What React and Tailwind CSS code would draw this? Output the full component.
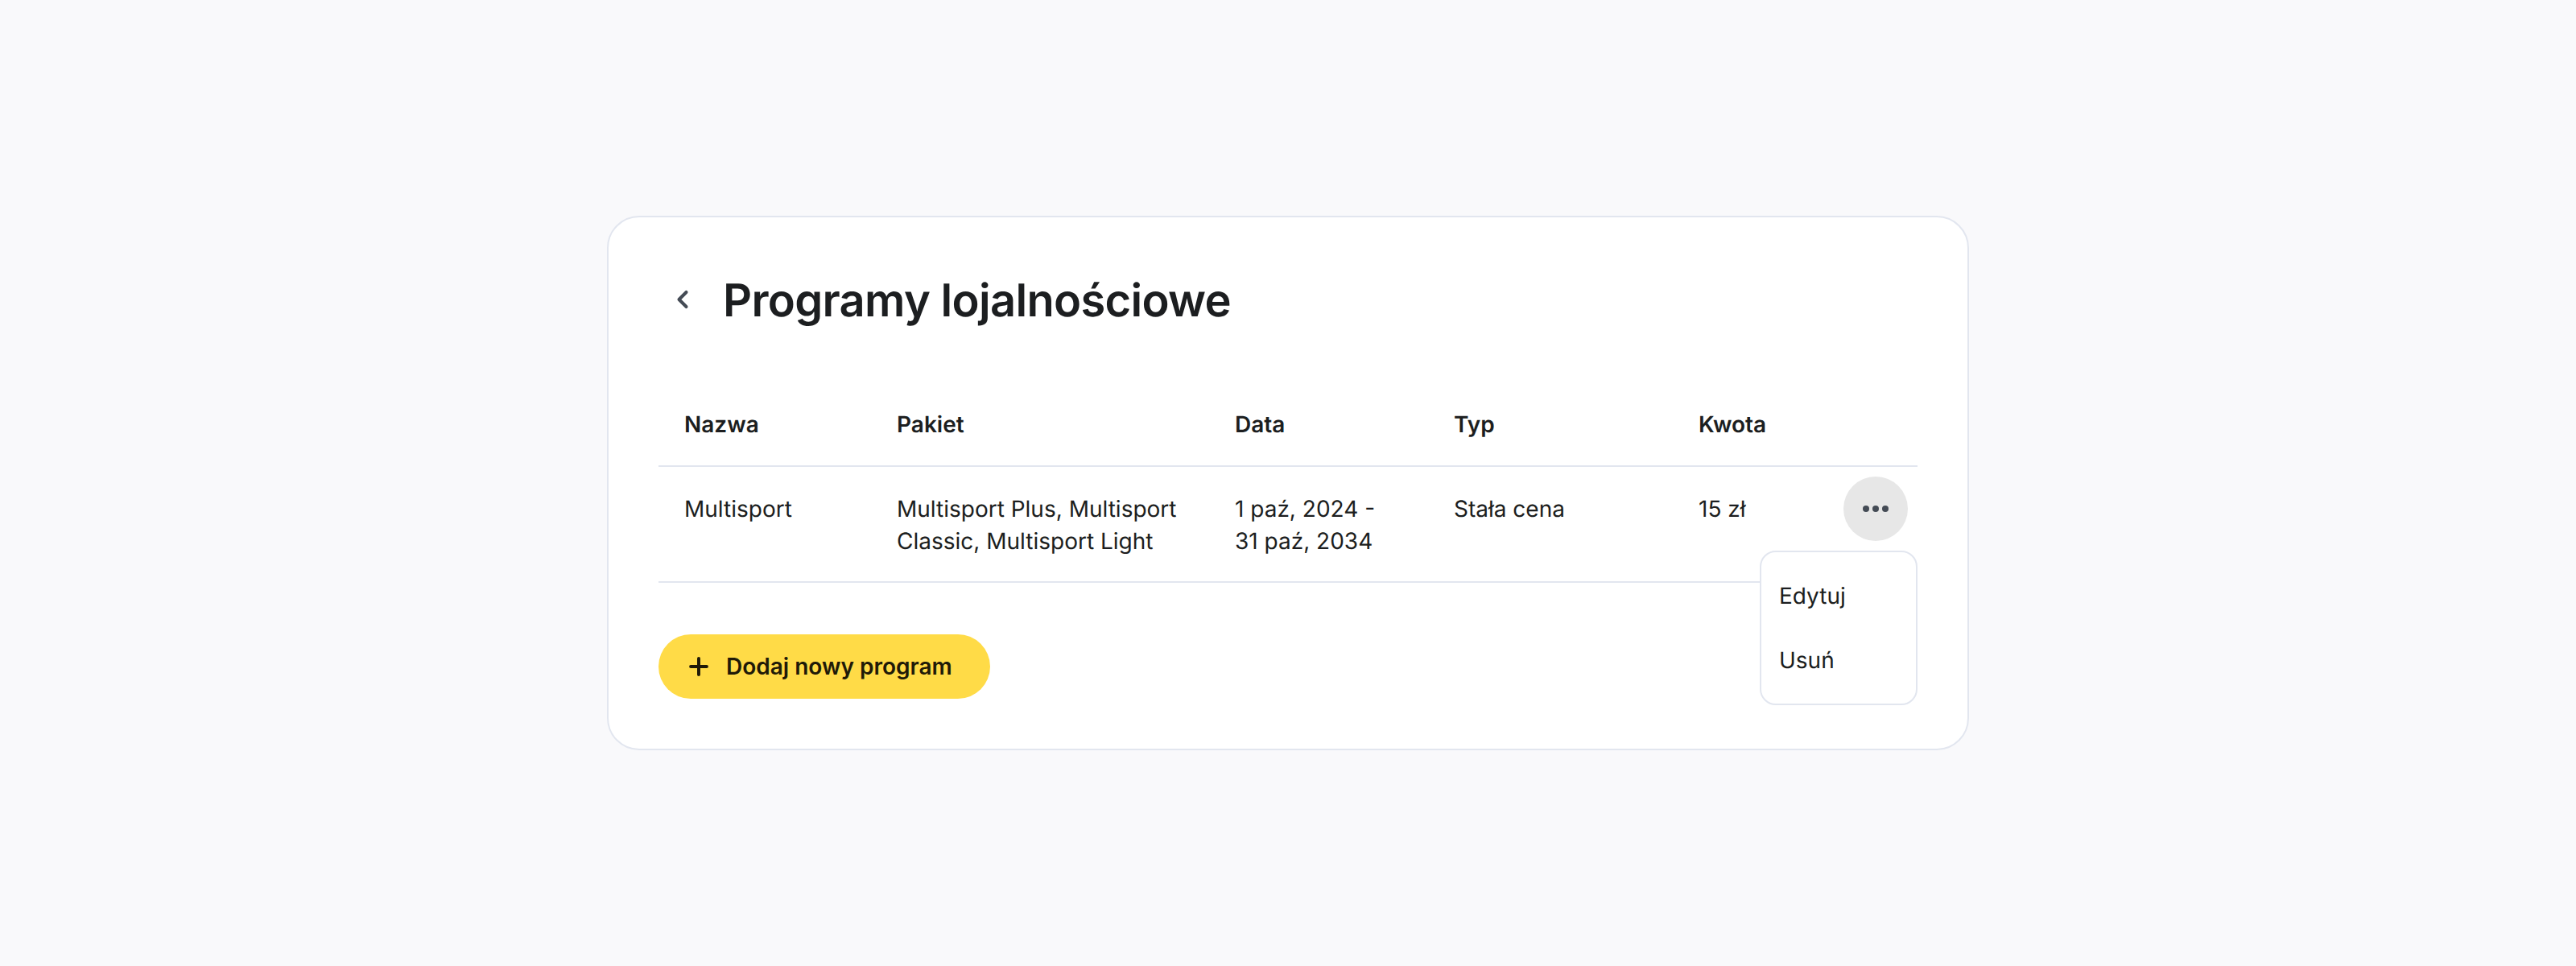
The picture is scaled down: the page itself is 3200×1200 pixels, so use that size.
import { ChevronLeft, Plus } from 'lucide-react';

const columns = 'grid grid-cols-[264px_420px_272px_304px_1fr]';

const App = () => {
  return (
    <main className="w-full h-[1200px] bg-[#f9f9fb] flex items-center justify-center font-['Inter',sans-serif] text-[#1c1e20] text-[28px] leading-[40px] [text-rendering:geometricPrecision]">
      <section className="relative w-[1692px] h-[664px] bg-white border-2 border-[#e2e6ef] rounded-[40px] px-[62px] pt-[64px]">
        {/* Title */}
        <div className="flex items-center h-[78px]">
          <ChevronLeft size={36} strokeWidth={2.7} className="ml-[12px] -mt-[2px] text-[#444b55]" />
          <h1 className="ml-[32px] text-[56px] leading-[78px] font-semibold tracking-[-0.012em]">Programy lojalnościowe</h1>
        </div>

        {/* Table */}
        <div className={`${columns} mt-[95px] border-b-2 border-[#e2e6ef] font-semibold pb-[31px]`}>
          <div className="pl-[32px]">Nazwa</div>
          <div className="pl-[32px]">Pakiet</div>
          <div className="pl-[32px]">Data</div>
          <div className="pl-[32px]">Typ</div>
          <div className="pl-[32px]">Kwota</div>
        </div>
        <div className={`${columns} relative border-b-2 border-[#e2e6ef] h-[144px] pt-[32px]`}>
          <div className="pl-[32px]">Multisport</div>
          <div className="pl-[32px]">Multisport Plus, Multisport Classic, Multisport Light</div>
          <div className="pl-[32px]">1 paź, 2024 -<br />31 paź, 2034</div>
          <div className="pl-[32px]">Stała cena</div>
          <div className="pl-[32px]">15 zł</div>
          <button className="absolute right-[12px] top-[12px] w-[80px] h-[80px] rounded-full bg-[#e7e7e7] flex items-center justify-center gap-[4px]">
            <span className="w-[8px] h-[8px] rounded-full bg-[#444b55]" />
            <span className="w-[8px] h-[8px] rounded-full bg-[#444b55]" />
            <span className="w-[8px] h-[8px] rounded-full bg-[#444b55]" />
          </button>
          {/* Dropdown */}
          <div className="absolute right-0 top-[104px] w-[196px] h-[192px] bg-white border-2 border-[#e2e6ef] rounded-[20px] z-10 pt-[34px] pl-[22px]">
            <div>Edytuj</div>
            <div className="mt-[40px]">Usuń</div>
          </div>
        </div>

        <button className="mt-[64px] w-[412px] h-[80px] rounded-full bg-[#ffdb47] flex items-center pl-[33px] font-semibold text-[#1f1a08]">
          <Plus size={34} strokeWidth={2.8} />
          <span className="ml-[17px]">Dodaj nowy program</span>
        </button>
      </section>
    </main>
  );
};

export default App;
